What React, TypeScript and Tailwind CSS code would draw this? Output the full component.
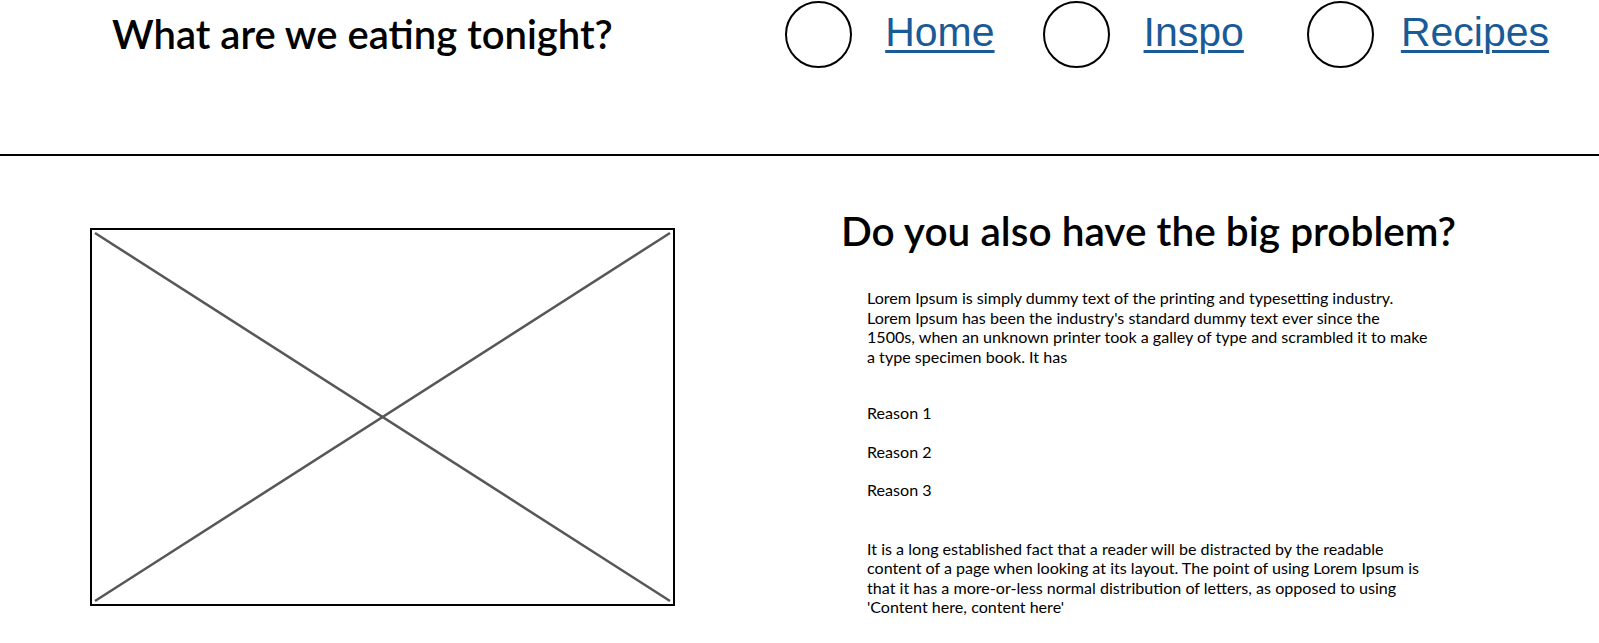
import React from 'react';

const navItems = [
  { label: 'Home', circleMl: 'ml-0', linkMl: 'ml-[33px]' },
  { label: 'Inspo', circleMl: 'ml-[48px]', linkMl: 'ml-[34px]' },
  { label: 'Recipes', circleMl: 'ml-[63px]', linkMl: 'ml-[27px]' },
];

const reasons = ['Reason 1', 'Reason 2', 'Reason 3'];

const App: React.FC = () => {
  return (
    <div className="min-h-screen w-full bg-white text-black font-['Lato',sans-serif]">
      <header className="flex h-[154px] items-start">
        <h1 className="ml-[112px] mt-[10px] text-[40px] leading-[48px] font-semibold whitespace-nowrap">
          What are we eating tonight?
        </h1>
        <nav className="ml-auto mr-[50px] flex items-start">
          {navItems.map((item) => (
            <div key={item.label} className={`flex items-start ${item.circleMl}`}>
              <div className="mt-[1px] h-[67px] w-[67px] rounded-full border-2 border-black" />
              <a
                href="#"
                className={`${item.linkMl} mt-[8px] font-['Liberation_Sans',Arial,sans-serif] text-[41px] leading-[48px] text-[#195a97] underline decoration-[3px] underline-offset-4`}
              >
                {item.label}
              </a>
            </div>
          ))}
        </nav>
      </header>

      <div className="h-[2px] w-full bg-black" />

      <main className="flex items-start">
        <div className="ml-[90px] mt-[72px] h-[378px] w-[585px] border-2 border-black">
          <svg className="h-full w-full" viewBox="0 0 581 374" preserveAspectRatio="none">
            <line x1="3" y1="3" x2="578" y2="371" stroke="#575757" strokeWidth="2.5" />
            <line x1="578" y1="3" x2="3" y2="371" stroke="#575757" strokeWidth="2.5" />
          </svg>
        </div>

        <section className="ml-[166px] mt-[51px] flex flex-col">
          <h2 className="text-[40.6px] leading-[48px] font-semibold whitespace-nowrap">
            Do you also have the big problem?
          </h2>
          <div className="ml-[26px] text-[16.1px] leading-[19.5px]">
            <p className="mt-[33px]">
              Lorem Ipsum is simply dummy text of the printing and typesetting industry.
              <br />
              Lorem Ipsum has been the industry's standard dummy text ever since the
              <br />
              1500s, when an unknown printer took a galley of type and scrambled it to make
              <br />
              a type specimen book. It has
            </p>
            <ul className="mt-[37px] flex flex-col gap-[19px]">
              {reasons.map((r) => (
                <li key={r}>{r}</li>
              ))}
            </ul>
            <p className="mt-[39px]">
              It is a long established fact that a reader will be distracted by the readable
              <br />
              content of a page when looking at its layout. The point of using Lorem Ipsum is
              <br />
              that it has a more-or-less normal distribution of letters, as opposed to using
              <br />
              'Content here, content here'
            </p>
          </div>
        </section>
      </main>
    </div>
  );
};

export default App;
